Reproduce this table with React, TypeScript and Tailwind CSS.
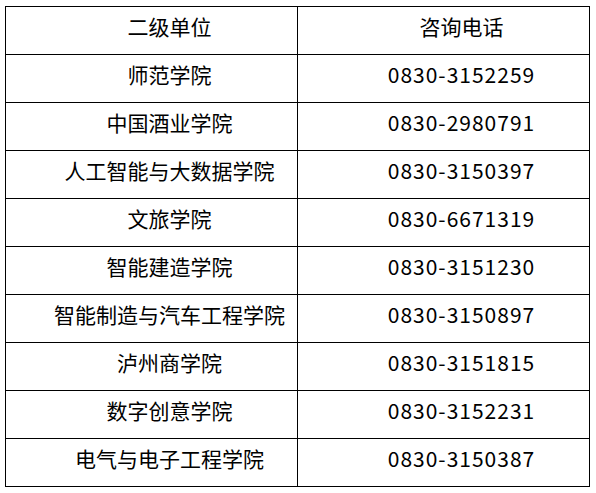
import React from 'react';

const rows: [string, string][] = [
  ['师范学院', '0830-3152259'],
  ['中国酒业学院', '0830-2980791'],
  ['人工智能与大数据学院', '0830-3150397'],
  ['文旅学院', '0830-6671319'],
  ['智能建造学院', '0830-3151230'],
  ['智能制造与汽车工程学院', '0830-3150897'],
  ['泸州商学院', '0830-3151815'],
  ['数字创意学院', '0830-3152231'],
  ['电气与电子工程学院', '0830-3150387'],
];

const Cell: React.FC<{ children: React.ReactNode; digits?: boolean }> = ({ children, digits }) => (
  <div
    className={
      'h-[48px] border-r border-b border-black pl-[36px] pt-[4px] text-center text-[21px] leading-[30px] text-black whitespace-nowrap' +
      (digits ? ' tracking-[1px]' : '')
    }
  >
    {children}
  </div>
);

export default function App() {
  return (
    <div className="w-[596px] h-[493px] bg-white pl-[5px] pt-[6px] font-['Noto_Sans_CJK_SC',sans-serif]">
      <div className="grid grid-cols-[292px_292px] w-[585px] border-l border-t border-black">
        <Cell>二级单位</Cell>
        <Cell>咨询电话</Cell>
        {rows.map(([name, phone]) => (
          <React.Fragment key={name}>
            <Cell>{name}</Cell>
            <Cell digits>{phone}</Cell>
          </React.Fragment>
        ))}
      </div>
    </div>
  );
}
